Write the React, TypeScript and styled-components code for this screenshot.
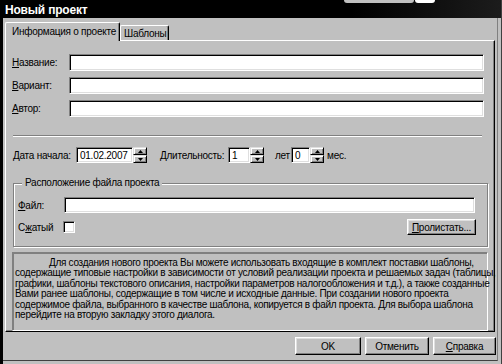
import React from "react";
import styled, { createGlobalStyle } from "styled-components";

const GlobalStyle = createGlobalStyle`
  html, body { margin: 0; padding: 0; background: #c0c0c0; }
  body {
    font-family: "Liberation Sans", Arial, sans-serif;
    font-size: 10px;
    letter-spacing: -0.25px;
    color: #000;
  }
  * { box-sizing: border-box; }
`;

const Window = styled.div`
  position: relative;
  width: 502px;
  height: 364px;
  background: #c0c0c0;
  border-left: 3px solid #000;
  border-right: 1px solid #404040;
  padding-right: 3px;
  padding-bottom: 3px;
  display: flex;
  flex-direction: column;
  overflow: hidden;
`;

const TitleBar = styled.div`
  height: 18px;
  margin-left: -3px;
  margin-right: -4px;
  background: linear-gradient(to right, #000 0%, #000 70%, #1c1c1c 100%);
  color: #fff;
  font-weight: bold;
  font-size: 12px;
  letter-spacing: -0.2px;
  display: flex;
  align-items: center;
  padding-left: 5px;
  padding-top: 1px;
  flex: none;
`;

const Overlap = styled.div<{ $left: number; $width: number; $color: string }>`
  position: absolute;
  top: 0;
  left: ${(p) => p.$left}px;
  width: ${(p) => p.$width}px;
  height: 3px;
  background: ${(p) => p.$color};
  border-radius: 0 0 3px 3px;
`;

const Body = styled.div`
  flex: 1;
  display: flex;
  flex-direction: column;
  border-right: 1px solid #808080;
  border-bottom: 1px solid #404040;
  padding-top: 4px;
`;

const TabsRow = styled.div`
  display: flex;
  align-items: flex-end;
  height: 18px;
  padding-left: 2px;
  position: relative;
  z-index: 2;
`;

const Tab = styled.div<{ $active?: boolean }>`
  background: #c0c0c0;
  border-top: 1px solid #fff;
  border-left: 1px solid #fff;
  border-right: 1px solid #000;
  box-shadow: inset -1px 0 #808080;
  border-radius: 2px 2px 0 0;
  display: flex;
  align-items: center;
  height: ${(p) => (p.$active ? 19 : 15)}px;
  margin-bottom: ${(p) => (p.$active ? -1 : 0)}px;
  padding: ${(p) => (p.$active ? "0 3px 2px 6px" : "0 2px 0 3px")};
  white-space: nowrap;
`;

const Panel = styled.div`
  height: 292px;
  margin: 0 2px;
  border-top: 1px solid #fff;
  border-left: 1px solid #fff;
  border-right: 1px solid #000;
  border-bottom: 1px solid #000;
  box-shadow: inset -1px -1px #808080;
  padding: 13px 6px 0 6px;
  display: flex;
  flex-direction: column;
`;

const FieldRow = styled.div`
  display: flex;
  align-items: center;
  height: 17px;
  margin-bottom: 6px;
`;

const Label = styled.span<{ $w?: number }>`
  width: ${(p) => (p.$w ? `${p.$w}px` : "auto")};
  flex: none;
  white-space: nowrap;
`;

const Sunken = styled.div<{ $w?: number; $mr?: number }>`
  background: #fff;
  height: 100%;
  ${(p) => (p.$w ? `width: ${p.$w}px; flex: none;` : "flex: 1;")}
  margin-right: ${(p) => p.$mr ?? 0}px;
  border-top: 1px solid #808080;
  border-left: 1px solid #808080;
  border-right: 1px solid #fff;
  border-bottom: 1px solid #fff;
  box-shadow: inset 1px 1px #000, inset -1px -1px #dfdfdf;
  display: flex;
  align-items: center;
  padding-left: 3px;
  padding-top: 1px;
  white-space: nowrap;
`;

const Separator = styled.div`
  height: 2px;
  margin: 12px 6px 0 1px;
  border-top: 1px solid #808080;
  border-bottom: 1px solid #fff;
`;

const DateRow = styled.div`
  display: flex;
  align-items: center;
  height: 16px;
  margin-top: 10px;
  padding-left: 1px;
`;

const Spinner = styled.div`
  width: 14px;
  height: 16px;
  flex: none;
  display: flex;
  flex-direction: column;
`;

const SpinBtn = styled.div`
  flex: 1;
  background: #c0c0c0;
  border-top: 1px solid #dfdfdf;
  border-left: 1px solid #dfdfdf;
  border-right: 1px solid #000;
  border-bottom: 1px solid #000;
  box-shadow: inset 1px 1px #fff, inset -1px -1px #808080;
  display: flex;
  align-items: center;
  justify-content: center;
`;

const Arrow = ({ up }: { up?: boolean }) => (
  <svg width="5" height="3" viewBox="0 0 5 3">
    {up ? <polygon points="2.5,0 5,3 0,3" fill="#000" /> : <polygon points="0,0 5,0 2.5,3" fill="#000" />}
  </svg>
);

const Spin = () => (
  <Spinner>
    <SpinBtn>
      <Arrow up />
    </SpinBtn>
    <SpinBtn>
      <Arrow />
    </SpinBtn>
  </Spinner>
);

const Gap = styled.span<{ $w: number }>`
  width: ${(p) => p.$w}px;
  flex: none;
`;

const GroupBox = styled.div`
  position: relative;
  margin: 20px 0 0 1px;
  height: 64px;
  border: 1px solid #808080;
  box-shadow: inset 1px 1px #fff, 1px 1px #fff;
  padding: 13px 6px 0 4px;
  display: flex;
  flex-direction: column;
`;

const Legend = styled.span`
  position: absolute;
  top: -7px;
  left: 8px;
  padding: 0 3px;
  background: #c0c0c0;
  white-space: nowrap;
`;

const FileRow = styled.div`
  display: flex;
  align-items: center;
  height: 16px;
`;

const CheckRow = styled.div`
  display: flex;
  align-items: center;
  height: 16px;
  margin-top: 6px;
`;

const CheckBox = styled.div`
  width: 12px;
  height: 12px;
  flex: none;
  background: #fff;
  border-top: 1px solid #808080;
  border-left: 1px solid #808080;
  border-right: 1px solid #fff;
  border-bottom: 1px solid #fff;
  box-shadow: inset 1px 1px #000, inset -1px -1px #dfdfdf;
`;

const Button = styled.div<{ $w: number; $h?: number; $mr?: number }>`
  width: ${(p) => p.$w}px;
  height: ${(p) => p.$h ?? 18}px;
  margin-right: ${(p) => p.$mr ?? 0}px;
  flex: none;
  background: #c0c0c0;
  border-top: 1px solid #fff;
  border-left: 1px solid #fff;
  border-right: 1px solid #000;
  border-bottom: 1px solid #000;
  box-shadow: inset -1px -1px #808080, inset 1px 1px #dfdfdf;
  display: flex;
  align-items: center;
  justify-content: center;
  white-space: nowrap;
`;

const Spacer = styled.div`
  flex: 1;
`;

const DescBox = styled.div`
  margin: 5px 0 0 0;
  height: 79px;
  border-top: 1px solid #808080;
  border-left: 1px solid #808080;
  border-right: 1px solid #fff;
  border-bottom: 1px solid #fff;
  box-shadow: 1px 1px #808080 inset;
  padding: 5px 2px 0 2px;
  line-height: 10.4px;
  letter-spacing: -0.3px;
  white-space: nowrap;
`;

const Indent = styled.span`
  display: inline-block;
  width: 34px;
`;

const ButtonRow = styled.div`
  display: flex;
  justify-content: flex-end;
  gap: 4px;
  margin-top: 5px;
  padding-right: 1px;
`;

const descLines = [
  "содержащие типовые настройки в зависимости от условий реализации проекта и решаемых задач (таблицы,",
  "графики, шаблоны текстового описания, настройки параметров налогообложения и т.д.), а также созданные",
  "Вами ранее шаблоны, содержащие в том числе и исходные данные. При создании нового проекта",
  "содержимое файла, выбранного в качестве шаблона, копируется в файл проекта. Для выбора шаблона",
  "перейдите на вторую закладку этого диалога.",
];

export default function App() {
  return (
    <>
      <GlobalStyle />
      <Window>
        <TitleBar>Новый проект</TitleBar>
        <Overlap $left={341} $width={70} $color="#c0c0c0" />
        <Overlap $left={412} $width={20} $color="#fff" />
        <Body>
          <TabsRow>
            <Tab $active>Информация о проекте</Tab>
            <Tab>Шаблоны</Tab>
          </TabsRow>
          <Panel>
            <FieldRow>
              <Label $w={57}>
                <u>Н</u>азвание:
              </Label>
              <Sunken $mr={4} />
            </FieldRow>
            <FieldRow>
              <Label $w={57}>
                <u>В</u>ариант:
              </Label>
              <Sunken $mr={4} />
            </FieldRow>
            <FieldRow>
              <Label $w={57}>
                <u>А</u>втор:
              </Label>
              <Sunken $mr={4} />
            </FieldRow>
            <Separator />
            <DateRow>
              <Label $w={63}>Дата начала:</Label>
              <Sunken $w={57}>01.02.2007</Sunken>
              <Spin />
              <Gap $w={13} />
              <Label $w={68}>
                <u>Д</u>лительность:
              </Label>
              <Sunken $w={22}>1</Sunken>
              <Spin />
              <Gap $w={11} />
              <Label $w={16}>лет</Label>
              <Sunken $w={19}>0</Sunken>
              <Spin />
              <Gap $w={3} />
              <Label>мес.</Label>
            </DateRow>
            <GroupBox>
              <Legend>Расположение файла проекта</Legend>
              <FileRow>
                <Label $w={46}>
                  <u>Ф</u>айл:
                </Label>
                <Sunken $mr={6} />
              </FileRow>
              <CheckRow>
                <Label $w={45}>
                  С<u>ж</u>атый
                </Label>
                <CheckBox />
                <Spacer />
                <Button $w={69} $h={16} $mr={5}>
                  <u>П</u>ролистать...
                </Button>
              </CheckRow>
            </GroupBox>
            <DescBox>
              <Indent />
              Для создания нового проекта Вы можете использовать входящие в комплект поставки шаблоны,
              {descLines.map((l) => (
                <div key={l}>{l}</div>
              ))}
            </DescBox>
          </Panel>
          <ButtonRow>
            <Button $w={66}>OK</Button>
            <Button $w={64}>Отменить</Button>
            <Button $w={63}>
              <u>С</u>правка
            </Button>
          </ButtonRow>
        </Body>
      </Window>
    </>
  );
}
